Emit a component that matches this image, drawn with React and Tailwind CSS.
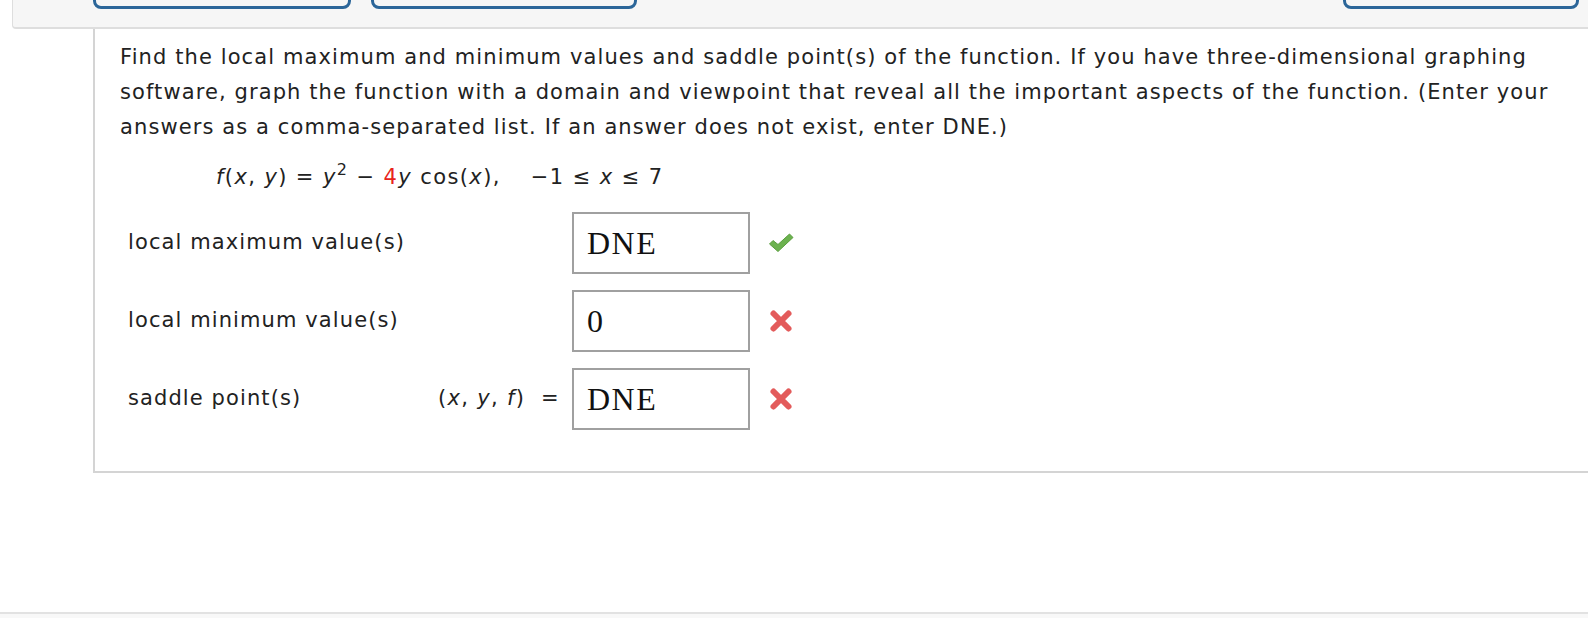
import React from 'react';

const Check = () => (
  <svg width="26" height="24" viewBox="0 0 26 24">
    <path d="M1.5 13 L5 9.5 L10 13.5 L21.5 3 L25 6.5 L10 20.5 Z" fill="#6cb24f" stroke="#5a9e3e" strokeWidth="1" strokeLinejoin="round" />
  </svg>
);

const Cross = () => (
  <svg width="26" height="26" viewBox="0 0 26 26">
    <path d="M5.5 5.5 L20.5 20.5 M20.5 5.5 L5.5 20.5" stroke="#e35b5b" strokeWidth="6" strokeLinecap="round" />
  </svg>
);

const AnswerRow = ({ label, prefix, value, ok }) => (
  <div className="flex items-center h-[62px]">
    <div className="w-[312px] shrink-0 pl-2">{label}</div>
    <div className="w-[140px] shrink-0 text-right pr-3">{prefix}</div>
    <div
      className="w-[178px] h-[62px] shrink-0 border-2 border-[#a0a0a0] flex items-center pl-[13px] text-[32px] leading-none tracking-[1.5px] text-[#111]"
      style={{ fontFamily: '"Liberation Serif", "Times New Roman", serif' }}
    >
      {value}
    </div>
    <div className="ml-[18px] w-[26px] shrink-0 flex justify-center">{ok ? <Check /> : <Cross />}</div>
  </div>
);

export default function App() {
  return (
    <div
      className="w-[1588px] h-[618px] overflow-hidden bg-white text-[#222] text-[21px] tracking-[1.1px]"
      style={{ fontFamily: '"DejaVu Sans", Verdana, sans-serif' }}
    >
      {/* top toolbar */}
      <div className="ml-[12px] h-[29px] bg-[#f6f6f6] border-b-2 border-l border-[#dedede] rounded-bl-sm relative">
        <div className="absolute left-[80px] top-[-6px] w-[258px] h-[15px] border-[3px] border-[#2c6699] rounded-b-lg" />
        <div className="absolute left-[358px] top-[-6px] w-[266px] h-[15px] border-[3px] border-[#2c6699] rounded-b-lg" />
        <div className="absolute left-[1330px] top-[-6px] w-[236px] h-[15px] border-[3px] border-[#2c6699] rounded-b-lg" />
      </div>

      {/* question panel */}
      <div className="ml-[93px] h-[444px] border-l-2 border-b-2 border-[#d4d4d4] pl-[25px] pt-[11px]">
        <p className="leading-[35px] pr-6">
          Find the local maximum and minimum values and saddle point(s) of the function. If you have three-dimensional graphing software, graph the function with a domain and viewpoint that reveal all the important aspects of the function. (Enter your answers as a comma-separated list. If an answer does not exist, enter DNE.)
        </p>
        <div className="mt-[15px] pl-[96px] leading-[35px] tracking-[1.4px]">
          <i>f</i>(<i>x</i>, <i>y</i>) = <i>y</i><sup className="text-[16px] top-[-9px]">2</sup> − <span className="text-[#e8241c]">4</span><i>y</i> cos(<i>x</i>),<span className="inline-block w-[30px]" />−1 ≤ <i>x</i> ≤ 7
        </div>
        <div className="mt-[17px] flex flex-col gap-[16px]">
          <AnswerRow label="local maximum value(s)" value="DNE" ok />
          <AnswerRow label="local minimum value(s)" value="0" />
          <AnswerRow label="saddle point(s)" prefix={<span className="tracking-[1.3px]">(<i>x</i>, <i>y</i>, <i>f</i>)&nbsp; =</span>} value="DNE" />
        </div>
      </div>

      <div className="mt-[139px] border-t-2 border-[#e2e2e2] h-[10px] bg-[#f8f8f8]" />
    </div>
  );
}
